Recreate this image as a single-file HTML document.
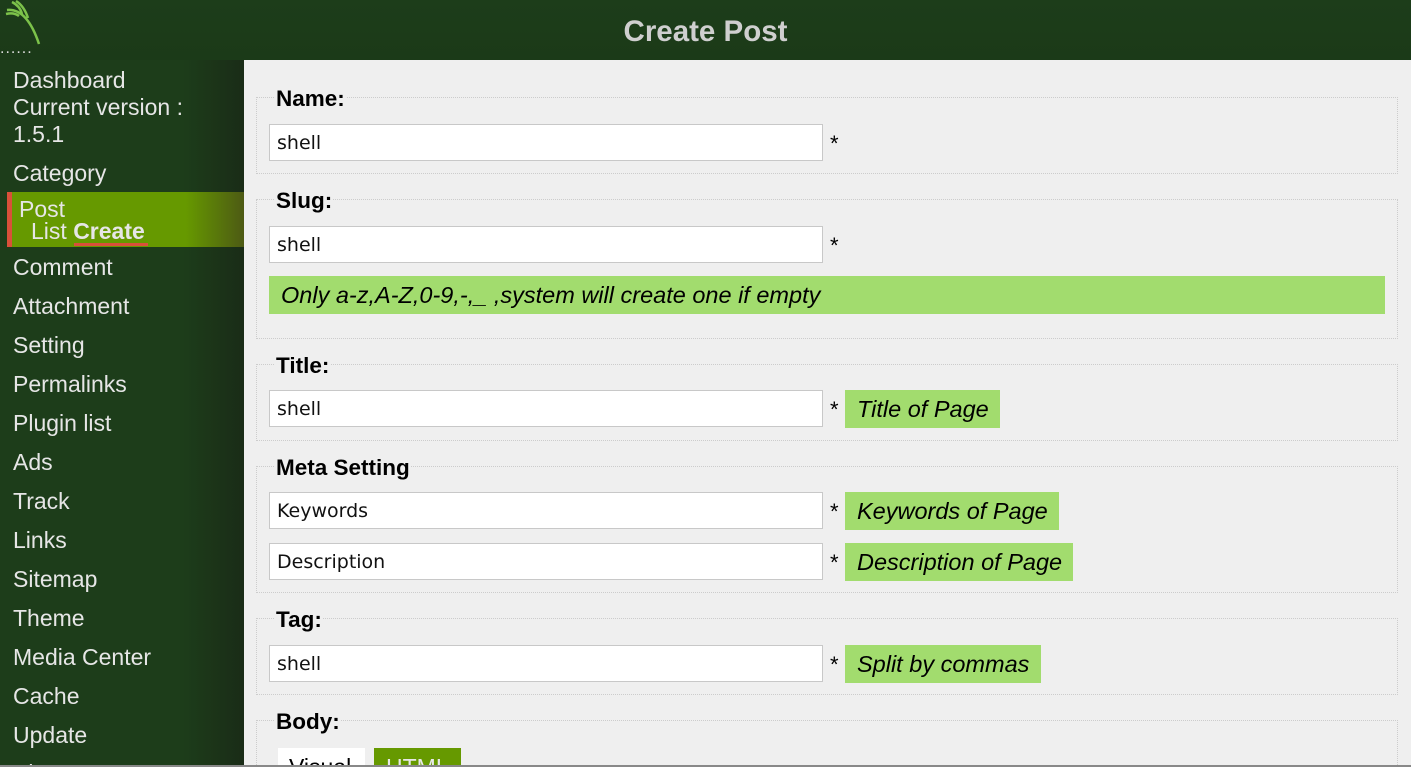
<!DOCTYPE html>
<html style="width:1411px;height:767px;overflow:hidden"><head><style>
*{margin:0;padding:0;box-sizing:border-box}
body{width:1411px;height:767px;overflow:hidden;background:#1d3d1a;font-family:"Liberation Sans",sans-serif;position:relative}
.hdr{position:absolute;left:0;top:0;width:1411px;height:60px;background:linear-gradient(#1d3d1a,#1b3a18);}
.ttl{position:absolute;left:0;right:0;top:15px;text-align:center;color:#cfcfcf;font-weight:bold;font-size:29.5px}
.side{position:absolute;left:0;top:60px;width:244px;height:707px;background:linear-gradient(90deg,#1d3d1a 75%,#1a2c17)}
.si{position:absolute;left:13px;color:#e6e6e6;font-size:23px;line-height:27px;white-space:nowrap}
.post{position:absolute;left:7px;top:192px;width:237px;height:55px;background:linear-gradient(90deg,#669900 75%,#4d5a14);border-left:5px solid #d9503a}
.main{position:absolute;left:244px;top:60px;width:1167px;height:705px;background:#efefef}
.fs{position:absolute;left:256px;width:1142px;border:1px dotted #ccc;}
.lg{position:absolute;left:275px;font-weight:bold;font-size:22.5px;color:#000;background:#efefef;padding:0 1px;line-height:24px}
.in{position:absolute;left:269px;width:554px;height:37px;background:#fff;border:1px solid #c8c8c8;font-family:"DejaVu Sans",sans-serif;font-size:19px;padding-left:7px;line-height:37px;color:#111}
.st{position:absolute;left:830px;font-size:22px}
.h{position:absolute;left:845px;height:38px;background:#a2dc6e;font-style:italic;font-size:23.5px;line-height:38px;padding-left:12px;color:#000;white-space:nowrap}
.bot{position:absolute;left:0;top:765px;width:1411px;height:2px;background:#888}
</style></head><body>
<div class="hdr"></div>
<svg style="position:absolute;left:2px;top:0" width="40" height="48" viewBox="0 0 40 48"><path d="M5 10 Q25 8 37 44 M10 2 Q18 6 20 14 M4 14 Q12 12 17 16 M14 1 Q22 6 26 18" stroke="#7cc24a" stroke-width="2.5" fill="none"/></svg>
<div style="position:absolute;left:0;top:40px;color:#ddd;font-size:16px;letter-spacing:1px">......</div>
<div class="ttl">Create Post</div>
<div class="side"></div>
<div class="post"></div>
<div class="si" style="top:67px">Dashboard<br>Current version :<br>1.5.1</div>
<div class="si" style="top:160px">Category</div>
<div class="si" style="left:19px;top:196px">Post</div>
<div class="si" style="left:31px;top:218px">List <b>Create</b></div>
<div style="position:absolute;left:74px;top:243px;width:74px;height:3px;background:#d9503a"></div>
<div class="si" style="top:254px">Comment</div>
<div class="si" style="top:293px">Attachment</div>
<div class="si" style="top:332px">Setting</div>
<div class="si" style="top:371px">Permalinks</div>
<div class="si" style="top:410px">Plugin list</div>
<div class="si" style="top:449px">Ads</div>
<div class="si" style="top:488px">Track</div>
<div class="si" style="top:527px">Links</div>
<div class="si" style="top:566px">Sitemap</div>
<div class="si" style="top:605px">Theme</div>
<div class="si" style="top:644px">Media Center</div>
<div class="si" style="top:683px">Cache</div>
<div class="si" style="top:722px">Update</div>
<div class="si" style="top:760px">Sitemap</div>
<div class="main"></div>
<div class="fs" style="top:97px;height:77px"></div>
<div class="fs" style="top:199px;height:140px"></div>
<div class="fs" style="top:364px;height:77px"></div>
<div class="fs" style="top:466px;height:127px"></div>
<div class="fs" style="top:618px;height:77px"></div>
<div class="fs" style="top:720px;height:45px;border-bottom:none"></div>
<div class="lg" style="top:87px">Name:</div>
<div class="lg" style="top:189px">Slug:</div>
<div class="lg" style="top:354px">Title:</div>
<div class="lg" style="top:456px">Meta Setting</div>
<div class="lg" style="top:608px">Tag:</div>
<div class="lg" style="top:710px">Body:</div>
<div class="in" style="top:124px">shell</div><div class="st" style="top:131px">*</div>
<div class="in" style="top:226px">shell</div><div class="st" style="top:233px">*</div>
<div class="h" style="left:269px;top:276px;width:1116px;padding-left:12px">Only a-z,A-Z,0-9,-,_ ,system will create one if empty</div>
<div class="in" style="top:390px">shell</div><div class="st" style="top:397px">*</div>
<div class="h" style="top:390px;width:155px">Title of Page</div>
<div class="in" style="top:492px">Keywords</div><div class="st" style="top:499px">*</div>
<div class="h" style="top:492px;width:214px">Keywords of Page</div>
<div class="in" style="top:543px">Description</div><div class="st" style="top:550px">*</div>
<div class="h" style="top:543px;width:228px">Description of Page</div>
<div class="in" style="top:645px">shell</div><div class="st" style="top:652px">*</div>
<div class="h" style="top:645px;width:196px">Split by commas</div>
<div style="position:absolute;left:278px;top:748px;width:87px;height:17px;overflow:hidden;background:#fff;font-size:23px;padding:6px 0 0 11px;line-height:26px;color:#000">Visual</div>
<div style="position:absolute;left:374px;top:748px;width:87px;height:17px;overflow:hidden;background:#669900;font-size:23px;padding:6px 0 0 12px;line-height:26px;color:#e8e8e8">HTML</div>
<div class="bot"></div>
</body></html>
